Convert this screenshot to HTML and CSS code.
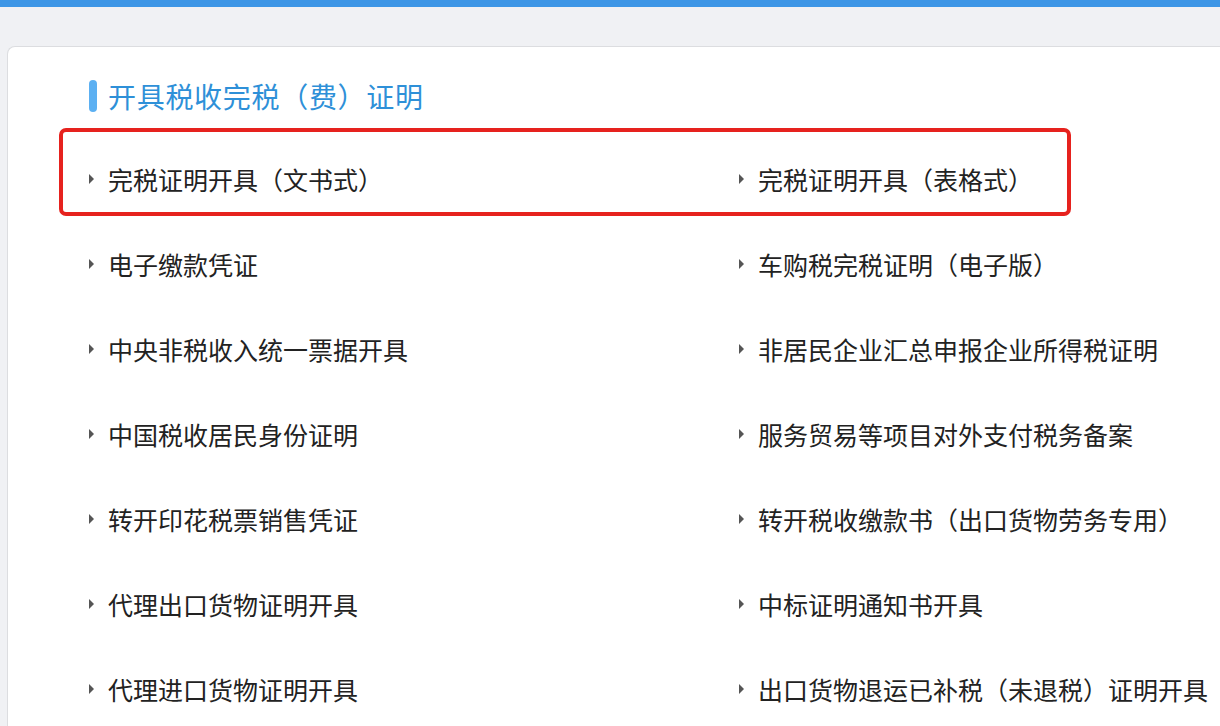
FILE: index.html
```html
<!DOCTYPE html>
<html lang="zh-CN">
<head>
<meta charset="utf-8">
<title>开具税收完税（费）证明</title>
<link rel="stylesheet" href="styles.css">
</head>
<body>
<div class="topbar"></div>
<main class="page">
  <section class="card">
    <h2 class="title"><span class="title-mark"></span>开具税收完税（费）证明</h2>
    <div class="grid">
      <div class="highlight"></div>
      <a class="item"><span class="arrow"></span>完税证明开具（文书式）</a>
      <a class="item"><span class="arrow"></span>完税证明开具（表格式）</a>
      <a class="item"><span class="arrow"></span>电子缴款凭证</a>
      <a class="item"><span class="arrow"></span>车购税完税证明（电子版）</a>
      <a class="item"><span class="arrow"></span>中央非税收入统一票据开具</a>
      <a class="item"><span class="arrow"></span>非居民企业汇总申报企业所得税证明</a>
      <a class="item"><span class="arrow"></span>中国税收居民身份证明</a>
      <a class="item"><span class="arrow"></span>服务贸易等项目对外支付税务备案</a>
      <a class="item"><span class="arrow"></span>转开印花税票销售凭证</a>
      <a class="item"><span class="arrow"></span>转开税收缴款书（出口货物劳务专用）</a>
      <a class="item"><span class="arrow"></span>代理出口货物证明开具</a>
      <a class="item"><span class="arrow"></span>中标证明通知书开具</a>
      <a class="item"><span class="arrow"></span>代理进口货物证明开具</a>
      <a class="item"><span class="arrow"></span>出口货物退运已补税（未退税）证明开具</a>
    </div>
  </section>
</main>
</body>
</html>
```

FILE: styles.css
```css
html, body {
  margin: 0;
  padding: 0;
  height: 100%;
  overflow: hidden;
}
body {
  background: #f0f1f4;
  font-family: "Noto Sans CJK SC", "Noto Sans", sans-serif;
  color: #222;
}
.topbar {
  height: 7px;
  background: #3d96e6;
}
.page {
  padding: 39px 0 0 7px;
}
.card {
  min-height: 700px;
  background: #fff;
  border: 1px solid #dcdde0;
  border-right: none;
  border-radius: 8px 0 0 0;
  padding: 33px 0 0 81px;
  box-sizing: border-box;
}
.title {
  display: flex;
  align-items: center;
  margin: 0;
  height: 32px;
  font-size: 28px;
  letter-spacing: 0.7px;
  font-weight: 400;
  color: #2e90d8;
  line-height: 32px;
}
.title-mark {
  width: 8px;
  height: 32px;
  border-radius: 4px;
  background: #5cb0f2;
  margin-right: 11px;
}
.grid {
  position: relative;
  display: grid;
  grid-template-columns: 650px 1fr;
  grid-auto-rows: 85px;
  margin-top: 24px;
}
.item {
  display: flex;
  align-items: center;
  font-size: 25px;
  color: #222;
  white-space: nowrap;
  overflow: hidden;
}
.arrow {
  flex: none;
  width: 0;
  height: 0;
  border-top: 5px solid transparent;
  border-bottom: 5px solid transparent;
  border-left: 5px solid #555;
  margin-right: 14px;
}
.highlight {
  position: absolute;
  left: -30px;
  top: -8px;
  width: 1012px;
  height: 88px;
  box-sizing: border-box;
  border: 4px solid #e6221e;
  border-radius: 7px;
  pointer-events: none;
}
```
